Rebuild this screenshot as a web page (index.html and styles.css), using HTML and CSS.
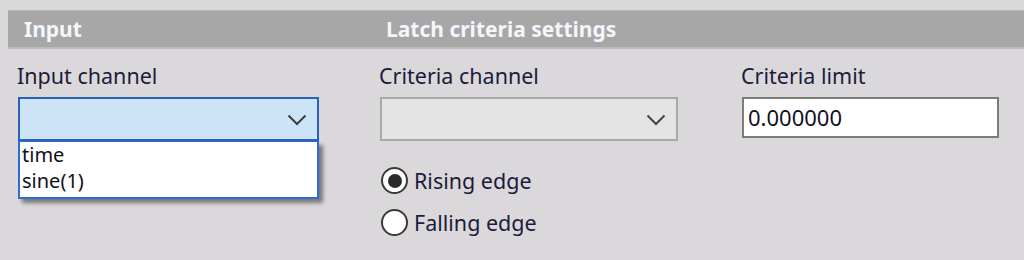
FILE: index.html
```html
<!DOCTYPE html>
<html>
<head>
<meta charset="utf-8">
<link rel="stylesheet" href="styles.css">
</head>
<body>
<div class="page">
  <div class="headbar">
    <div class="head-cell">Input</div>
    <div class="head-cell">Latch criteria settings</div>
  </div>
  <div class="fields">
    <div class="col col--input">
      <div class="label">Input channel</div>
      <div class="combo-wrap">
        <div class="combo combo--active">
          <svg class="chev" width="20" height="12" viewBox="0 0 20 12"><path d="M1.5 1.5 L10 10 L18.5 1.5" fill="none" stroke="#3f3f3f" stroke-width="2"/></svg>
        </div>
        <div class="droplist">
          <div class="drop-item">time</div>
          <div class="drop-item">sine(1)</div>
        </div>
      </div>
    </div>
    <div class="col col--criteria">
      <div class="label">Criteria channel</div>
      <div class="combo combo--disabled">
        <svg class="chev" width="20" height="12" viewBox="0 0 20 12"><path d="M1.5 1.5 L10 10 L18.5 1.5" fill="none" stroke="#454545" stroke-width="2"/></svg>
      </div>
      <div class="radios">
        <div class="radio-row"><span class="radio radio--on"></span><span class="radio-text">Rising edge</span></div>
        <div class="radio-row"><span class="radio"></span><span class="radio-text">Falling edge</span></div>
      </div>
    </div>
    <div class="col col--limit">
      <div class="label">Criteria limit</div>
      <div class="textbox">0.000000</div>
    </div>
  </div>
</div>
</body>
</html>
```
FILE: styles.css
```css
html, body {
  margin: 0;
  padding: 0;
  background: #dbd8db;
}
body {
  width: 1024px;
  height: 260px;
  overflow: hidden;
  font-family: "Noto Sans", "DejaVu Sans", sans-serif;
  color: #1c1c3a;
}
.page {
  padding-top: 10px;
}
.headbar {
  margin-left: 8px;
  height: 36px;
  background: #a7a7a7;
  border-top: 1px solid #b8b8b8;
  border-bottom: 2px solid #bcbcbc;
  display: grid;
  grid-template-columns: 362px 1fr;
  align-items: center;
}
.head-cell {
  padding-left: 16px;
  font-weight: bold;
  font-size: 21px;
  color: #f3f6fa;
  line-height: 36px;
}
.fields {
  display: grid;
  grid-template-columns: 362px 362px 1fr;
  padding-left: 18px;
  padding-top: 10px;
}
.label {
  font-size: 21.5px;
  line-height: 34px;
  height: 38px;
  margin-left: -1px;
}
.combo {
  box-sizing: border-box;
  width: 301px;
  height: 44px;
  position: relative;
}
.combo--active {
  background: #cde4f7;
  border: 2px solid #2a62b8;
}
.combo--disabled {
  width: 298px;
  background: #e4e4e4;
  border: 2px solid #a9a9a9;
}
.chev {
  position: absolute;
  right: 10px;
  top: 15px;
}
.combo-wrap {
  position: relative;
  width: 301px;
}
.droplist {
  position: absolute;
  left: 0;
  top: 44px;
  box-sizing: border-box;
  width: 301px;
  height: 58px;
  background: #ffffff;
  border: 2px solid #2d6cd2;
  border-top-width: 1px;
  box-shadow: 4px 4px 4px rgba(0, 0, 0, 0.45);
  padding-left: 2px;
}
.drop-item {
  font-size: 20px;
  line-height: 26px;
  color: #101020;
}
.radios {
  display: flex;
  flex-direction: column;
  gap: 15px;
  margin-top: 26px;
}
.radio-row {
  display: flex;
  align-items: center;
  height: 27px;
}
.radio {
  box-sizing: border-box;
  width: 27px;
  height: 27px;
  border-radius: 50%;
  border: 2px solid #3a3a3a;
  background: #ffffff;
  position: relative;
  margin-left: 1px;
  margin-right: 6px;
}
.radio--on::after {
  content: "";
  position: absolute;
  left: 4.5px;
  top: 4.5px;
  width: 14px;
  height: 14px;
  border-radius: 50%;
  background: #2a2a2a;
}
.radio-text {
  font-size: 21.5px;
  line-height: 27px;
}
.textbox {
  box-sizing: border-box;
  width: 257px;
  height: 41px;
  background: #ffffff;
  border: 2px solid #7c7c7c;
  font-size: 22px;
  line-height: 37px;
  padding-left: 4px;
  color: #101028;
}
```
